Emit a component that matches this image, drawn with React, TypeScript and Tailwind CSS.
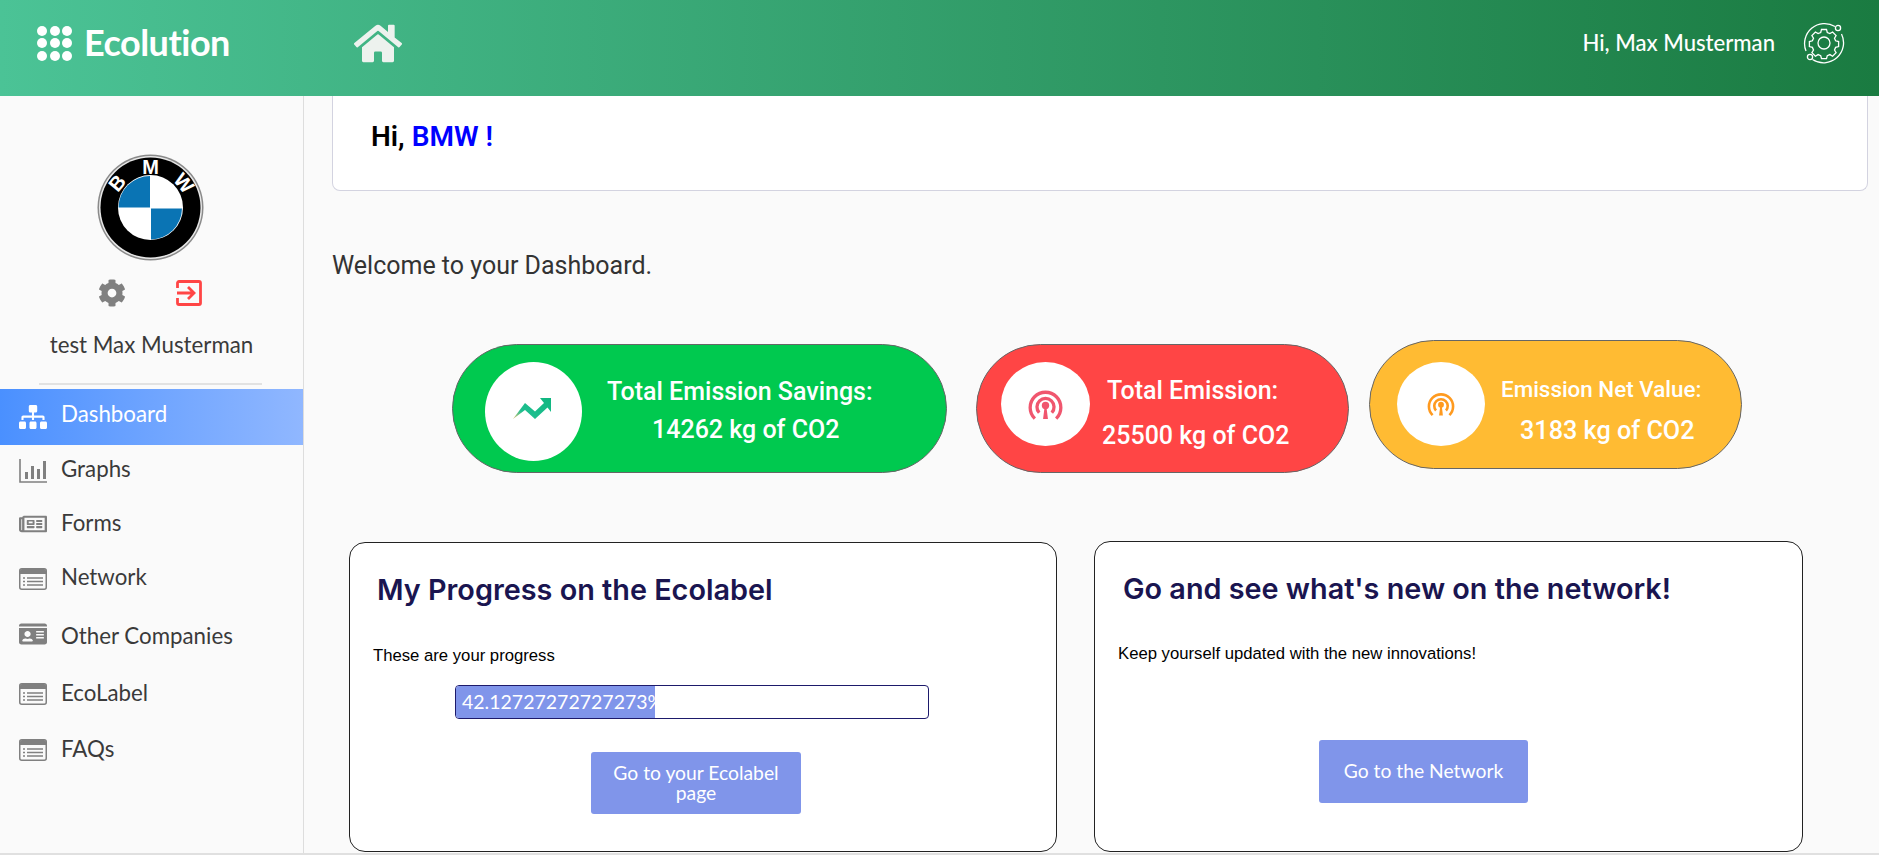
import { FaCog, FaHome, FaIdCard, FaRegNewspaper, FaSitemap } from "react-icons/fa";

const lato = "font-['Lato',sans-serif]";
const roboto = "font-['Roboto',sans-serif]";

function ListCardIcon() {
  return (
    <svg viewBox="0 0 28 22" className="h-[22px] w-[28px]" fill="none">
      <rect x="0.75" y="0.75" width="26.5" height="20.5" rx="2" stroke="#808080" strokeWidth="1.5" />
      <path d="M1 3a2 2 0 0 1 2-2h22a2 2 0 0 1 2 2v3H1z" fill="#808080" />
      <path d="M8 10h16M8 13.5h16M8 17h16M4 10h2M4 13.5h2M4 17h2" stroke="#808080" strokeWidth="1.5" />
    </svg>
  );
}

function GraphIcon() {
  return (
    <svg viewBox="0 0 28 24" className="h-[24px] w-[28px]" fill="none">
      <path d="M1 0v23h27" stroke="#808080" strokeWidth="1.6" />
      <rect x="6" y="13" width="3" height="7" fill="#808080" />
      <rect x="12" y="7" width="3" height="13" fill="#808080" />
      <rect x="18" y="10" width="3" height="10" fill="#808080" />
      <rect x="24" y="2" width="3" height="18" fill="#808080" />
    </svg>
  );
}

function ExitIcon() {
  return (
    <svg viewBox="0 0 26 26" className="h-[26px] w-[26px]" fill="none" stroke="#ff4545" strokeWidth="2.800">
      <path d="M1.500 8V3a1.500 1.500 0 0 1 1.500-1.500h20A1.500 1.500 0 0 1 24.500 3v20a1.500 1.500 0 0 1-1.500 1.500H3A1.500 1.500 0 0 1 1.500 23v-5" />
      <path d="M1 13h16M12 7l6 6-6 6" />
    </svg>
  );
}

function BmwLogo() {
  return (
    <svg viewBox="0 0 107 107" className="ml-[97px] block h-[107px] w-[107px]">
      <circle cx="53.5" cy="53.5" r="53" fill="#8a8a8a" />
      <circle cx="53.5" cy="53.5" r="51.5" fill="#e8e8e8" />
      <circle cx="53.5" cy="53.5" r="50" fill="#000" />
      <circle cx="53.5" cy="53.5" r="32.5" fill="#fff" />
      <path d="M53 22a31.5 31.5 0 0 0-31.5 31.5H53z" fill="#0a74b4" />
      <path d="M54 54.5h31a31.5 31.5 0 0 1-31 31z" fill="#0a74b4" />
      <g fill="#fff" fontFamily="Liberation Sans" fontWeight="700" fontSize="20" textAnchor="middle">
        <text x="53.5" y="19.5">M</text>
        <text x="20" y="36" transform="rotate(-50 20 29)">B</text>
        <text x="87" y="36" transform="rotate(50 87 29)">W</text>
      </g>
    </svg>
  );
}

function SettingsOrbit() {
  return (
    <svg viewBox="0 0 42 42" className="h-[42px] w-[42px]" fill="none" stroke="#fff" strokeWidth="1.3">
      <path d="M32 4.500A20 20 0 0 0 3 29" />
      <path d="M9.500 37.500A20 20 0 0 0 38.500 12" />
      <circle cx="35" cy="6" r="2.600" />
      <circle cx="7" cy="35" r="2.600" />
      <circle cx="21" cy="21" r="6" />
      <path d="M18.500 7.500h5l.8 3 2.600 1.100 2.700-1.600 3.500 3.500-1.600 2.700 1.100 2.600 3 .8v5l-3 .8-1.100 2.600 1.600 2.700-3.500 3.500-2.700-1.600-2.600 1.100-.8 3h-5l-.8-3-2.600-1.100-2.700 1.600-3.500-3.500 1.600-2.700-1.100-2.600-3-.8v-5l3-.8 1.100-2.600-1.600-2.700 3.500-3.500 2.700 1.600 2.600-1.100z" />
    </svg>
  );
}

function SignalIcon({ color, size }: { color: string; size: string }) {
  return (
    <svg viewBox="0 0 36 34" className={size} fill="none" stroke={color} strokeWidth="3.400">
      <path d="M7 31.500A15.800 15.800 0 1 1 29 31.500" />
      <path d="M11.500 25.500A8.800 8.800 0 1 1 24.500 25.500" />
      <circle cx="18" cy="18" r="3.800" fill={color} stroke="none" />
      <path d="M15.500 32l1.500-12h2l1.500 12z" fill={color} stroke="none" />
    </svg>
  );
}

function TrendIcon() {
  return (
    <svg viewBox="0 0 38 21" className="h-[21px] w-[38px]">
      <defs>
        <linearGradient id="trend" x1="0" y1="1" x2="1" y2="0">
          <stop offset="0" stopColor="#e8c070" />
          <stop offset="0.3" stopColor="#1fbf90" />
          <stop offset="1" stopColor="#0fb67f" />
        </linearGradient>
      </defs>
      <path d="M0 21 12 5l10 8.500 9-8.500-4-5h11v14l-3.500-4.500L22 21 12 12z" fill="url(#trend)" />
    </svg>
  );
}

const navItems = [
  { label: "Graphs", row: "h-[48px]", iconShift: "translate-y-[2px]", textShift: "", icon: <GraphIcon /> },
  {
    label: "Forms",
    row: "h-[60px]",
    iconShift: "translate-y-[1px]",
    textShift: "",
    icon: <FaRegNewspaper className="h-[22px] w-[28px] text-[#808080]" preserveAspectRatio="none" />,
  },
  { label: "Network", row: "h-[50px]", iconShift: "translate-y-[1px]", textShift: "-translate-y-[1px]", icon: <ListCardIcon /> },
  {
    label: "Other Companies",
    row: "h-[62px]",
    iconShift: "",
    textShift: "translate-y-[2px]",
    icon: <FaIdCard className="h-[24px] w-[28px] text-[#808080]" preserveAspectRatio="none" />,
  },
  { label: "EcoLabel", row: "h-[56px]", iconShift: "translate-y-[1px]", textShift: "", icon: <ListCardIcon /> },
  { label: "FAQs", row: "h-[56px]", iconShift: "translate-y-[1px]", textShift: "", icon: <ListCardIcon /> },
];

export default function App() {
  return (
    <div className="flex h-[855px] flex-col overflow-hidden bg-[#fafafa]">
      <header className="flex h-[96px] shrink-0 items-center bg-linear-to-r from-[#4bc396] to-[#1a7b41] pb-[10px] text-white">
        <div className="ml-[37px] grid w-[35px] grid-cols-3 gap-[2.5px]">
          {Array.from({ length: 9 }).map((_, i) => (
            <span key={i} className="h-[10px] w-[10px] rounded-full bg-white" />
          ))}
        </div>
        <span className={`${lato} ml-[12px] -translate-y-[1px] text-[36px] font-bold leading-none tracking-[-0.5px]`}>Ecolution</span>
        <FaHome className="ml-[124px] h-[43px] w-[48px] text-[#edf2ee]" />
        <span className={`${lato} ml-auto text-[22.1px] font-medium`}>Hi, Max Musterman</span>
        <span className="ml-[28px] mr-[34px]">
          <SettingsOrbit />
        </span>
      </header>

      <div className="flex min-h-0 flex-1 border-b-[2px] border-[#e0e0e0]">
        <aside className={`${lato} w-[304px] shrink-0 border-r border-[#dddddd] bg-[#fafafa] pt-[58px] text-[22.3px] text-[#3a3a3a]`}>
          <BmwLogo />
          <div className="mt-[18px] flex items-center pl-[98px]">
            <FaCog className="h-[28px] w-[28px] text-[#808080]" />
            <span className="ml-[50px]">
              <ExitIcon />
            </span>
          </div>
          <p className="mt-[24px] text-center leading-[28px]">test Max Musterman</p>
          <div className="ml-[39px] mr-[41px] mt-[24px] h-[2px] bg-[#e2e2e2]" />
          <div className="mt-[4px] flex h-[56px] items-center bg-linear-to-r from-[#4a90ff] to-[#90b7ff] pl-[19px] text-white">
            <FaSitemap className="h-[24px] w-[28px]" preserveAspectRatio="none" />
            <span className="ml-[14px] -translate-y-[3px]">Dashboard</span>
          </div>
          {navItems.map((item) => (
            <div key={item.label} className={`flex items-center pl-[19px] ${item.row}`}>
              <span className={item.iconShift}>{item.icon}</span>
              <span className={`ml-[14px] ${item.textShift}`}>{item.label}</span>
            </div>
          ))}
        </aside>

        <main className="min-w-0 flex-1">
          <div className="ml-[28px] mr-[11px] h-[95px] rounded-b-lg border border-t-0 border-[#d3d3e0] bg-white pl-[38px] pt-[22px]">
            <p className={`${roboto} text-[28px] font-semibold leading-[38px] text-black`}>
              Hi, <span className="text-[#0000ff]">BMW !</span>
            </p>
          </div>

          <p className={`${roboto} ml-[28px] mt-[59px] text-[25px] leading-[32px] text-[#333333]`}>
            Welcome to your Dashboard.
          </p>

          <div className={`${roboto} mt-[58px] flex items-start pl-[148px] text-[25px] font-medium leading-[32px] text-white`}>
            <div className="mt-[4px] flex h-[129px] w-[495px] items-start rounded-[65px] border border-[#666666] bg-[#00c94f]">
              <div className="ml-[32px] mt-[17px] flex h-[99px] w-[97px] items-center justify-center rounded-[50%] bg-white">
                <span className="-translate-x-[2px] -translate-y-[3px]">
                  <TrendIcon />
                </span>
              </div>
              <div className="whitespace-nowrap">
                <p className="ml-[25px] mt-[31px]">Total Emission Savings:</p>
                <p className="ml-[70px] mt-[6px]">14262 kg of CO2</p>
              </div>
            </div>
            <div className="ml-[29px] mt-[4px] flex h-[129px] w-[373px] items-start rounded-[65px] border border-[#666666] bg-[#ff4545]">
              <div className="ml-[24px] mt-[17px] flex h-[84px] w-[89px] items-center justify-center rounded-[50%] bg-white">
                <SignalIcon color="#f0566e" size="h-[33px] w-[35px]" />
              </div>
              <div className="whitespace-nowrap">
                <p className="ml-[17px] mt-[30px]">Total Emission:</p>
                <p className="ml-[12px] mt-[13px]">25500 kg of CO2</p>
              </div>
            </div>
            <div className="ml-[20px] flex h-[129px] w-[373px] items-start rounded-[65px] border border-[#666666] bg-[#ffbb33]">
              <div className="ml-[27px] mt-[21px] flex h-[84px] w-[88px] items-center justify-center rounded-[50%] bg-white">
                <SignalIcon color="#ff9a1f" size="h-[26px] w-[28px]" />
              </div>
              <div className="whitespace-nowrap">
                <p className="ml-[16px] mt-[32px] text-[22.4px]">Emission Net Value:</p>
                <p className="ml-[35px] mt-[10px] text-[25.2px]">3183 kg of CO2</p>
              </div>
            </div>
          </div>

          <div className="mt-[68px] flex items-start pl-[45px]">
            <section className="mt-[1px] h-[310px] w-[708px] rounded-[16px] border border-[#222222] bg-white">
              <h2 className="ml-[27px] mt-[28px] font-['Inter',sans-serif] text-[28.8px] font-semibold leading-[38px] text-[#1a1550]">
                My Progress on the Ecolabel
              </h2>
              <p className="ml-[23px] mt-[35px] font-['Liberation_Sans',sans-serif] text-[16.7px] leading-[24px] text-black">
                These are your progress
              </p>
              <div className="ml-[105px] mt-[17px] h-[34px] w-[474px] overflow-hidden rounded-[4px] border border-[#1d1a6b] bg-white">
                <div className={`${lato} h-full w-[42.127%] whitespace-nowrap bg-[#8095ea] pl-[6px] text-[19.5px] leading-[32px] text-white`}>
                  42.12727272727273%
                </div>
              </div>
              <div className={`${lato} ml-[241px] mt-[33px] flex h-[62px] w-[210px] items-center justify-center rounded-[3px] bg-[#8095ea] px-[18px] text-center text-[19.3px] leading-[20px] text-white`}>
                Go to your Ecolabel page
              </div>
            </section>
            <section className="ml-[37px] h-[311px] w-[709px] rounded-[16px] border border-[#222222] bg-white">
              <h2 className="ml-[28px] mt-[28px] font-['Inter',sans-serif] text-[28.8px] font-semibold leading-[38px] text-[#1a1550]">
                Go and see what's new on the network!
              </h2>
              <p className="ml-[23px] mt-[34px] font-['Liberation_Sans',sans-serif] text-[16.7px] leading-[24px] text-black">
                Keep yourself updated with the new innovations!
              </p>
              <div className={`${lato} ml-[224px] mt-[74px] flex h-[63px] w-[209px] items-center justify-center rounded-[3px] bg-[#8095ea] text-[19.3px] text-white`}>
                Go to the Network
              </div>
            </section>
          </div>
        </main>
      </div>
    </div>
  );
}
